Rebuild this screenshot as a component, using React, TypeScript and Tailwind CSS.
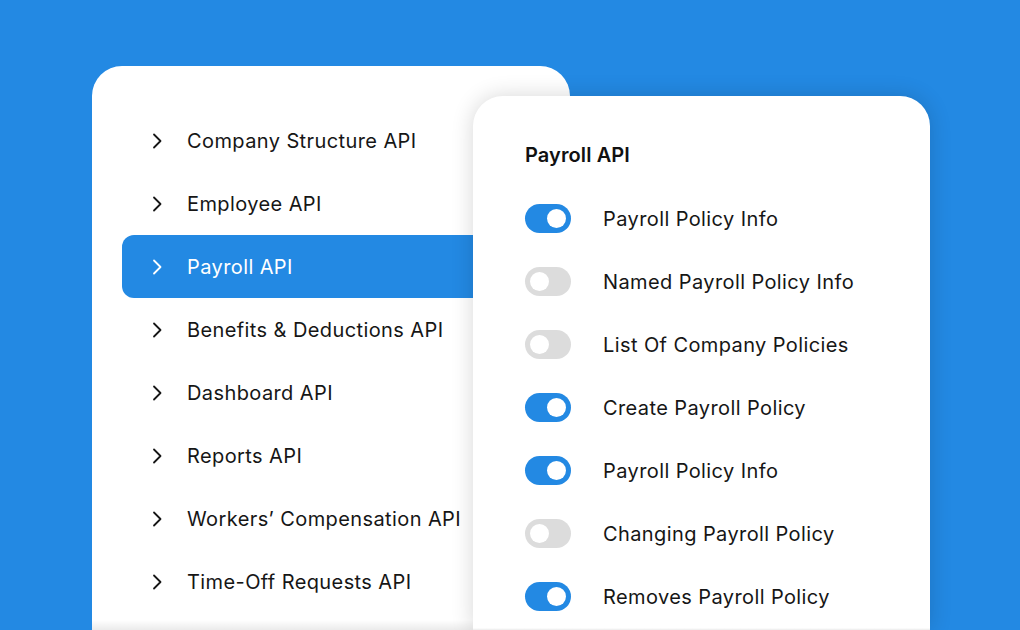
import React from "react";

const apis = [
  "Company Structure API",
  "Employee API",
  "Payroll API",
  "Benefits & Deductions API",
  "Dashboard API",
  "Reports API",
  "Workers’ Compensation API",
  "Time-Off Requests API",
];

const policies: { label: string; on: boolean }[] = [
  { label: "Payroll Policy Info", on: true },
  { label: "Named Payroll Policy Info", on: false },
  { label: "List Of Company Policies", on: false },
  { label: "Create Payroll Policy", on: true },
  { label: "Payroll Policy Info", on: true },
  { label: "Changing Payroll Policy", on: false },
  { label: "Removes Payroll Policy", on: true },
];

function Chevron() {
  return (
    <svg width="12" height="18" viewBox="0 0 12 18" fill="none" className="shrink-0">
      <polyline
        points="3,2.5 9.5,9 3,15.5"
        stroke="currentColor"
        strokeWidth="1.8"
        strokeLinecap="round"
        strokeLinejoin="round"
      />
    </svg>
  );
}

function Toggle({ on }: { on: boolean }) {
  return (
    <div
      className={
        on
          ? "w-[46px] h-[29px] rounded-full bg-[#2389e3] flex items-center justify-end px-[5px] shrink-0"
          : "w-[46px] h-[29px] rounded-full bg-[#dcdcdc] flex items-center justify-start px-[5px] shrink-0"
      }
    >
      <span className="w-[19px] h-[19px] rounded-full bg-white" />
    </div>
  );
}

export default function App() {
  return (
    <div
      className="w-[1020px] h-[630px] overflow-hidden bg-[#2389e3] flex items-start pl-[92px] pt-[66px]"
      style={{ fontFamily: "Inter, 'Noto Sans', sans-serif" }}
    >
      {/* API list */}
      <div className="w-[478px] h-[564px] shrink-0 bg-white rounded-t-[30px] flex flex-col pt-[43px] px-[30px]">
        {apis.map((name) => {
          const active = name === "Payroll API";
          return (
            <div
              key={name}
              className={
                active
                  ? "h-[63px] flex items-center gap-[24px] pl-[29px] rounded-[12px] bg-[#2389e3] text-white -mr-[30px]"
                  : "h-[63px] flex items-center gap-[24px] pl-[29px] text-[#161616]"
              }
            >
              <Chevron />
              <span className="text-[20px] leading-none tracking-[0.4px]">{name}</span>
            </div>
          );
        })}
        <div className="mt-auto -mx-[30px] h-[10px] bg-gradient-to-b from-white to-[#ebebeb]" />
      </div>

      {/* Payroll detail */}
      <div className="w-[457px] h-[534px] shrink-0 -ml-[97px] mt-[30px] bg-white rounded-t-[30px] shadow-[0_0_22px_rgba(0,0,0,0.16)] flex flex-col pt-[47px] px-[52px]">
        <h2 className="text-[20px] font-semibold leading-[24px] text-[#111] tracking-[0.1px]">Payroll API</h2>
        <div className="mt-[20px] flex flex-col">
          {policies.map((p, i) => (
            <div key={i} className="h-[63px] flex items-center gap-[32px]">
              <Toggle on={p.on} />
              <span className="text-[20px] leading-none text-[#161616] tracking-[0.4px]">{p.label}</span>
            </div>
          ))}
        </div>
        <div className="mt-auto -mx-[52px] h-[10px] bg-gradient-to-b from-white to-[#ebebeb]" />
      </div>
    </div>
  );
}
